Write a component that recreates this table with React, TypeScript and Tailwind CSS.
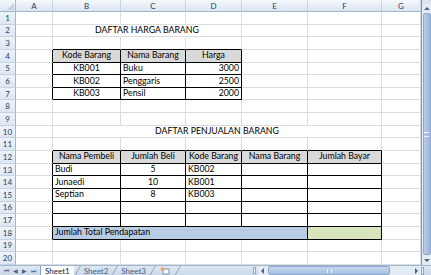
import React from 'react';

type Cell = {
    text?: string;
    align?: 'left' | 'center' | 'right';
    bg?: 'gray' | 'blue' | 'green';
    span?: number;
};

const COLS = ['A', 'B', 'C', 'D', 'E', 'F', 'G'];

const BG: Record<string, string> = {
    gray: 'bg-[#d9d9d9]',
    blue: 'bg-[#b8cce4]',
    green: 'bg-[#d7e4bc]',
};

const ALIGN: Record<string, string> = {
    left: 'justify-start',
    center: 'justify-center',
    right: 'justify-end',
};

const SPAN: Record<number, string> = {
    1: '',
    3: 'col-span-3',
    4: 'col-span-4',
    5: 'col-span-5',
};

const cells: Record<string, Cell> = {
    '2,2': { text: 'DAFTAR HARGA BARANG', align: 'center', span: 3 },
    '4,2': { text: 'Kode Barang', align: 'center', bg: 'gray' },
    '4,3': { text: 'Nama Barang', align: 'center', bg: 'gray' },
    '4,4': { text: 'Harga', align: 'center', bg: 'gray' },
    '5,2': { text: 'KB001', align: 'center' },
    '5,3': { text: 'Buku' },
    '5,4': { text: '3000', align: 'right' },
    '6,2': { text: 'KB002', align: 'center' },
    '6,3': { text: 'Penggaris' },
    '6,4': { text: '2500', align: 'right' },
    '7,2': { text: 'KB003', align: 'center' },
    '7,3': { text: 'Pensil' },
    '7,4': { text: '2000', align: 'right' },
    '10,2': { text: 'DAFTAR PENJUALAN BARANG', align: 'center', span: 5 },
    '12,2': { text: 'Nama Pembeli', align: 'center', bg: 'gray' },
    '12,3': { text: 'Jumlah Beli', align: 'center', bg: 'gray' },
    '12,4': { text: 'Kode Barang', align: 'center', bg: 'gray' },
    '12,5': { text: 'Nama Barang', align: 'center', bg: 'gray' },
    '12,6': { text: 'Jumlah Bayar', align: 'center', bg: 'gray' },
    '13,2': { text: 'Budi' },
    '13,3': { text: '5', align: 'center' },
    '13,4': { text: 'KB002' },
    '14,2': { text: 'Junaedi' },
    '14,3': { text: '10', align: 'center' },
    '14,4': { text: 'KB001' },
    '15,2': { text: 'Septian' },
    '15,3': { text: '8', align: 'center' },
    '15,4': { text: 'KB003' },
    '18,2': { text: 'Jumlah Total Pendapatan', bg: 'blue', span: 4 },
    '18,6': { bg: 'green' },
};

// cells inside a bordered table
function inTable(r: number, c: number) {
    if (r >= 4 && r <= 7 && c >= 2 && c <= 4) return true;
    if (r >= 12 && r <= 18 && c >= 2 && c <= 6) return true;
    return false;
}

function SheetRow({ r }: { r: number }) {
    const out: React.ReactNode[] = [];
    out.push(
        <div
            key="h"
            className="flex items-center justify-center bg-gradient-to-b from-[#eef3fa] to-[#dde7f3] border-r border-b border-r-[#9eb6ce] border-b-[#c5d3e3] text-[8px] text-[#27415f]"
        >
            {r}
        </div>
    );
    let c = 1;
    while (c <= 7) {
        const cell = cells[`${r},${c}`] || {};
        const span = cell.span || 1;
        const last = c + span - 1;
        const rightBlack = inTable(r, last) || inTable(r, last + 1);
        const bottomBlack = inTable(r, c) || inTable(r + 1, c);
        out.push(
            <div
                key={c}
                className={[
                    'flex items-center overflow-visible whitespace-nowrap px-[2px] border-r border-b text-[8.75px] leading-none text-black',
                    SPAN[span],
                    rightBlack ? 'border-r-black' : 'border-r-[#dadcdd]',
                    bottomBlack ? 'border-b-black' : 'border-b-[#dadcdd]',
                    cell.bg ? BG[cell.bg] : 'bg-white',
                    ALIGN[cell.align || 'left'],
                ].join(' ')}
            >
                {cell.text}
            </div>
        );
        c += span;
    }
    return <>{out}</>;
}

function Arrow({ dir }: { dir: 'up' | 'down' | 'left' | 'right' }) {
    const pts = {
        up: '1,5 4,2 7,5',
        down: '1,3 4,6 7,3',
        left: '5,1 2,4 5,7',
        right: '3,1 6,4 3,7',
    }[dir];
    return (
        <svg width="8" height="8" viewBox="0 0 8 8">
            <polygon points={pts} fill="#4d6185" />
        </svg>
    );
}

function TabSlant() {
    return (
        <svg width="7" height="10" viewBox="0 0 7 10" className="shrink-0">
            <line x1="0.5" y1="10" x2="6.5" y2="0" stroke="#8aa2c4" strokeWidth="1" />
        </svg>
    );
}

export default function App() {
    const rows = Array.from({ length: 20 }, (_, i) => i + 1);
    return (
        <div
            className="w-[431px] h-[275px] overflow-hidden bg-white flex flex-col"
            style={{ fontFamily: 'Lato, "Liberation Sans", sans-serif' }}
        >
            <div className="flex h-[265px]">
                <div className="w-[421px] grid grid-cols-[16px_37px_68px_65px_56px_66px_74px_39px] grid-rows-[12px] auto-rows-[12.65px]">
                    {/* corner */}
                    <div className="flex items-end justify-end p-[1px] bg-gradient-to-b from-[#f3f7fb] to-[#dde6f1] border-r border-b border-[#9eb6ce]">
                        <svg width="7" height="7" viewBox="0 0 7 7">
                            <polygon points="7,0 7,7 0,7" fill="#c6d3e2" />
                        </svg>
                    </div>
                    {COLS.map(l => (
                        <div
                            key={l}
                            className="flex items-center justify-center bg-gradient-to-b from-[#f6f9fc] to-[#dbe4f0] border-r border-b border-r-[#c5d3e3] border-b-[#9eb6ce] text-[8px] text-[#27415f]"
                        >
                            {l}
                        </div>
                    ))}
                    {rows.map(r => (
                        <SheetRow key={r} r={r} />
                    ))}
                </div>
                {/* vertical scrollbar */}
                <div className="w-[10px] flex flex-col bg-[#e3ebf5] border-l border-[#7e97b8]">
                    <div className="h-[4px] bg-[#dbe5f1]" />
                    <div className="h-[9px] flex items-center justify-center">
                        <Arrow dir="up" />
                    </div>
                    <div className="flex-1 mx-[0.5px] rounded-[2px] bg-gradient-to-r from-[#b7cbe6] via-[#a9c0e0] to-[#9cb5d8] border border-[#8ea9cf] flex items-center justify-center">
                        <div className="w-[5px] h-[5px] border-y border-[#e8eef7]" />
                    </div>
                    <div className="h-[10px] flex items-center justify-center">
                        <Arrow dir="down" />
                    </div>
                </div>
            </div>
            {/* sheet tabs and horizontal scrollbar */}
            <div className="h-[10px] flex items-stretch bg-gradient-to-b from-[#dee7f3] to-[#cbd9ea] border-t border-[#9eb6ce] text-[8px] leading-none">
                <div className="w-[40px] flex items-center justify-around px-[2px] text-[#4d6185] text-[6px]">
                    <span>⏮</span>
                    <span>◀</span>
                    <span>▶</span>
                    <span>⏭</span>
                </div>
                <div className="flex items-center px-[4px] bg-white text-[#0f2440] border-l border-[#8aa2c4]">Sheet1</div>
                <TabSlant />
                <div className="flex items-center px-[3px] text-[#48607f]">Sheet2</div>
                <TabSlant />
                <div className="flex items-center px-[3px] text-[#48607f]">Sheet3</div>
                <TabSlant />
                <div className="flex items-center px-[4px]">
                    <svg width="10" height="8" viewBox="0 0 10 8">
                        <rect x="3" y="2" width="6" height="5" fill="#f4f7fb" stroke="#6d86aa" strokeWidth="0.8" />
                        <circle cx="2.5" cy="2" r="1.8" fill="#f3a33a" />
                    </svg>
                </div>
                <TabSlant />
                <div className="flex-1" />
                <div className="w-[3px] my-[1px] mr-[2px] bg-[#eef3f9] border border-[#8ea9cf]" />
                <div className="w-[163px] flex items-center bg-[#e3ebf5]">
                    <div className="w-[10px] flex items-center justify-center">
                        <Arrow dir="left" />
                    </div>
                    <div className="w-[122px] h-[9px] rounded-[2px] bg-gradient-to-b from-[#c6d6eb] to-[#a9c0e0] border border-[#8ea9cf] flex items-center justify-center">
                        <div className="w-[5px] h-[4px] border-x border-[#eef3f9]" />
                    </div>
                    <div className="flex-1" />
                    <div className="w-[10px] flex items-center justify-center">
                        <Arrow dir="right" />
                    </div>
                </div>
                <div className="w-[10px] flex items-center">
                    <div className="w-[3px] h-[8px] bg-[#eef3f9] border border-[#8ea9cf]" />
                </div>
            </div>
        </div>
    );
}
